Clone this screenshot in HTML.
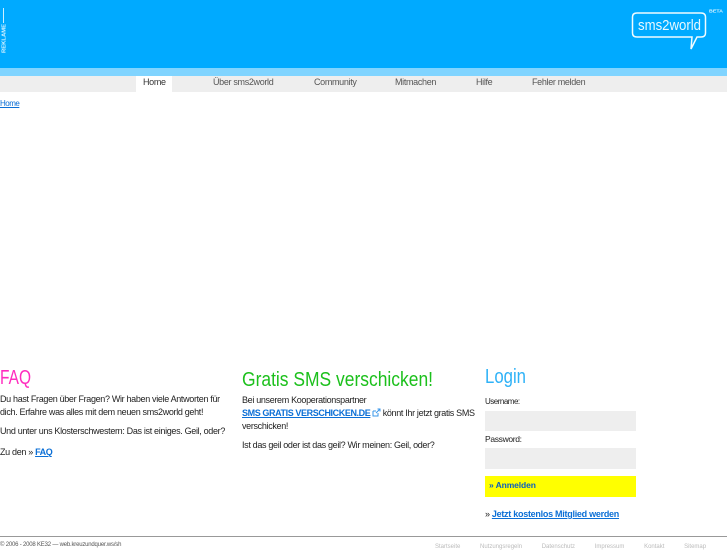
<!DOCTYPE html>
<html><head><meta charset="utf-8"><style>
html,body{margin:0;padding:0;background:#fff;}
body{width:727px;height:545px;overflow:hidden;position:relative;font-family:"Liberation Sans",sans-serif;font-size:9px;letter-spacing:-.33px;color:#222;}
.a{position:absolute;white-space:nowrap;}
.l{line-height:13px;}
a{color:#0b6fd6;}
a.b{font-weight:bold;letter-spacing:-.4px;}
.n{position:absolute;top:76px;line-height:12px;color:#555;white-space:nowrap;}
svg text{letter-spacing:0;}
</style></head><body>
<div class="a" style="left:0;top:0;width:727px;height:68px;background:#00aaff"></div>
<div class="a" style="left:0;top:68px;width:727px;height:8px;background:#80d4ff"></div>
<div class="a" style="left:0;top:76px;width:727px;height:16px;background:#eeeeee"></div>
<div class="a" style="left:136px;top:76px;width:36px;height:16px;background:#fff"></div>
<div class="n" style="left:143px;color:#333">Home</div>
<div class="n" style="left:213px">Über sms2world</div>
<div class="n" style="left:314px">Community</div>
<div class="n" style="left:395px">Mitmachen</div>
<div class="n" style="left:476px">Hilfe</div>
<div class="n" style="left:532px">Fehler melden</div>
<svg class="a" style="left:0;top:0" width="727" height="68">
<path d="M3.500 8V23" stroke="#cdefff" stroke-width="1" fill="none"/>
<path d="M637 13H701Q705.500 13 705.500 17V33Q705.500 37 701 37H697L691 49L692 37H637Q632.500 37 632.500 33V17Q632.500 13 637 13Z" fill="none" stroke="#f0fbff" stroke-width="1.500"/>
<text x="638" y="30" font-family="Liberation Sans" font-size="14.500" fill="#e8f8ff" textLength="63" lengthAdjust="spacingAndGlyphs">sms2world</text>
<text x="709" y="12.500" font-family="Liberation Sans" font-size="4.500" font-weight="bold" fill="#d5f1ff" textLength="14" lengthAdjust="spacingAndGlyphs">BETA</text>
<text transform="translate(5.500 53) rotate(-90)" font-family="Liberation Sans" font-size="5" font-weight="bold" fill="#d5f1ff" textLength="29" lengthAdjust="spacingAndGlyphs">REKLAME</text>
</svg>
<a class="a" href="#" style="left:0;top:98px;line-height:12px;font-size:8px;letter-spacing:-.5px">Home</a>

<svg class="a" style="left:0;top:362px" width="727" height="32" font-family="Liberation Sans">
<text x="0" y="22" font-size="20" fill="#ff2cbe" textLength="31" lengthAdjust="spacingAndGlyphs">FAQ</text>
<text x="242" y="24" font-size="20" fill="#1cc01c" textLength="191" lengthAdjust="spacingAndGlyphs">Gratis SMS verschicken!</text>
<text x="485" y="21" font-size="20" fill="#2fb2f7" textLength="41" lengthAdjust="spacingAndGlyphs">Login</text>
</svg>
<div class="a l" style="left:0;top:393px">Du hast Fragen über Fragen? Wir haben viele Antworten für<br>dich. Erfahre was alles mit dem neuen sms2world geht!</div>
<div class="a l" style="left:0;top:425px">Und unter uns Klosterschwestern: Das ist einiges. Geil, oder?</div>
<div class="a l" style="left:0;top:446px">Zu den » <a class="b" href="#">FAQ</a></div>

<div class="a l" style="left:242px;top:394px">Bei unserem Kooperationspartner<br><a class="b" href="#">SMS GRATIS VERSCHICKEN.DE</a> <svg width="9" height="9" viewBox="0 0 9 9" style="vertical-align:-1px;margin-left:-1px"><path d="M1 3H4M1 3V8H6V5M4 5L8 1M5.500 1H8V3.500" fill="none" stroke="#3a97ea" stroke-width="1"/></svg> könnt Ihr jetzt gratis SMS<br>verschicken!</div>
<div class="a l" style="left:242px;top:439px">Ist das geil oder ist das geil? Wir meinen: Geil, oder?</div>

<div class="a" style="left:485px;top:397px;font-size:8px;line-height:10px;letter-spacing:-.5px">Username:</div>
<div class="a" style="left:485px;top:411px;width:151px;height:20px;background:#eeeeee"></div>
<div class="a" style="left:485px;top:434px;font-size:8.500px;line-height:10px">Password:</div>
<div class="a" style="left:485px;top:448px;width:151px;height:21px;background:#eeeeee"></div>
<div class="a" style="left:485px;top:476px;width:151px;height:21px;background:#ffff00;font-weight:bold;color:#0b5fc0;font-size:8.500px;line-height:19px;text-indent:4px;letter-spacing:-.1px">» Anmelden</div>
<div class="a l" style="left:485px;top:508px">» <a class="b" href="#" style="letter-spacing:-.27px">Jetzt kostenlos Mitglied werden</a></div>

<div class="a" style="left:0;top:536px;width:727px;height:1px;background:#999"></div>
<div class="a" style="left:0;top:541px;font-size:6px;line-height:8px;color:#555;letter-spacing:-.2px">© 2006 - 2008 KE32 — web.kreuzundquer.ws/sh</div>
<div class="a" style="left:435px;top:543px;font-size:6px;line-height:8px;color:#bbb;word-spacing:18px;letter-spacing:0">Startseite Nutzungsregeln Datenschutz Impressum Kontakt Sitemap</div>
</body></html>
